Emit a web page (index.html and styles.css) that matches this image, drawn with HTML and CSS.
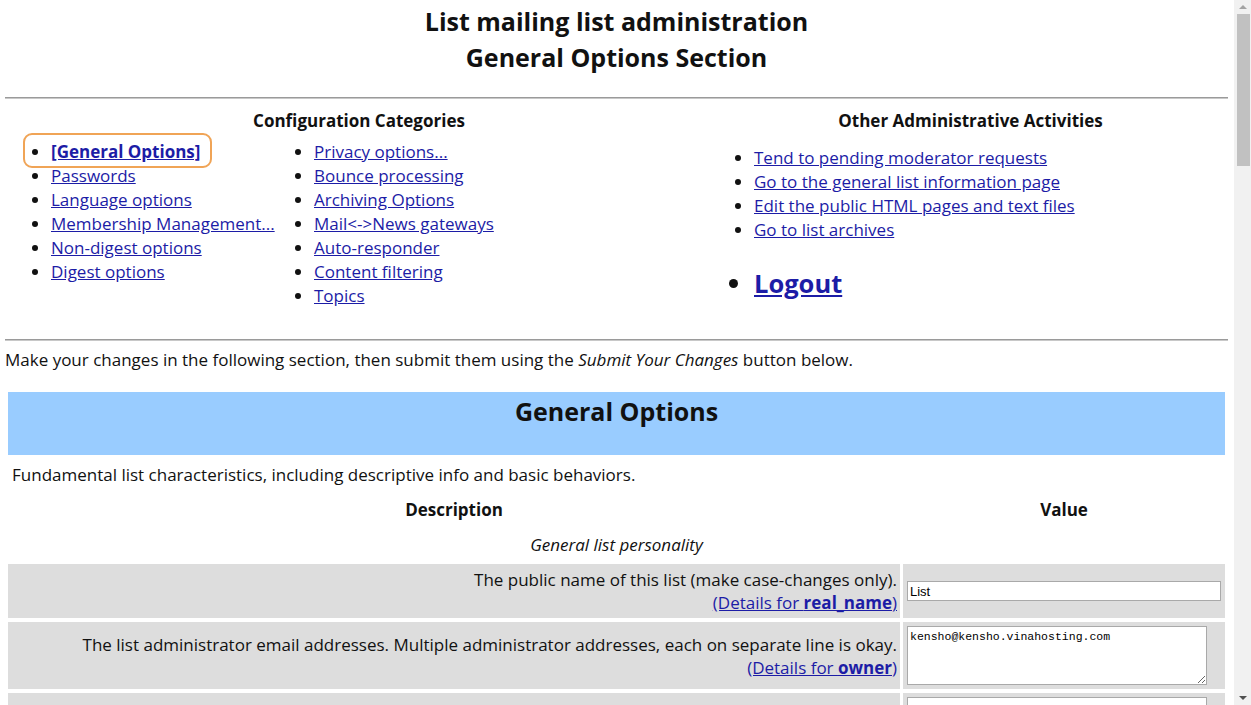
FILE: index.html
```html
<!DOCTYPE html>
<html lang="en">
<head>
    <meta charset="UTF-8">
    <title>List Administration - General Options Section</title>
    <link rel="stylesheet" href="styles.css">
</head>
<body>
    <div class="page-title">
        List mailing list administration<br>
        General Options Section
    </div>
    <hr class="rule rule-top">

    <div class="nav">
        <div class="nav-col nav-config">
            <div class="nav-head">Configuration Categories</div>
            <div class="nav-lists">
                <ul class="links">
                    <li class="current"><a href="#"><b>[General Options]</b></a></li>
                    <li><a href="#">Passwords</a></li>
                    <li><a href="#">Language options</a></li>
                    <li><a href="#">Membership Management...</a></li>
                    <li><a href="#">Non-digest options</a></li>
                    <li><a href="#">Digest options</a></li>
                </ul>
                <ul class="links">
                    <li><a href="#">Privacy options...</a></li>
                    <li><a href="#">Bounce processing</a></li>
                    <li><a href="#">Archiving Options</a></li>
                    <li><a href="#">Mail&lt;-&gt;News gateways</a></li>
                    <li><a href="#">Auto-responder</a></li>
                    <li><a href="#">Content filtering</a></li>
                    <li><a href="#">Topics</a></li>
                </ul>
            </div>
        </div>
        <div class="nav-col nav-other">
            <div class="nav-head">Other Administrative Activities</div>
            <ul class="links links-other">
                <li><a href="#">Tend to pending moderator requests</a></li>
                <li><a href="#">Go to the general list information page</a></li>
                <li><a href="#">Edit the public HTML pages and text files</a></li>
                <li><a href="#">Go to list archives</a></li>
                <li class="logout"><a href="#">Logout</a></li>
            </ul>
        </div>
    </div>

    <hr class="rule rule-bottom">

    <p class="intro">Make your changes in the following section, then submit them using the <em>Submit Your Changes</em> button below.</p>

    <table class="options">
        <colgroup>
            <col>
            <col class="value-col">
        </colgroup>
        <tr>
            <td colspan="2" class="section-head">General Options</td>
        </tr>
        <tr>
            <td colspan="2" class="section-blurb">Fundamental list characteristics, including descriptive info and basic behaviors.</td>
        </tr>
        <tr>
            <th>Description</th>
            <th>Value</th>
        </tr>
        <tr>
            <td colspan="2" class="group-title"><em>General list personality</em></td>
        </tr>
        <tr class="opt">
            <td class="desc">The public name of this list (make case-changes only).<br>
                <a href="#">(Details for <b>real_name</b>)</a></td>
            <td class="val"><input type="text" class="text-in" value="List"></td>
        </tr>
        <tr class="opt">
            <td class="desc">The list administrator email addresses. Multiple administrator addresses, each on separate line is okay.<br>
                <a href="#">(Details for <b>owner</b>)</a></td>
            <td class="val"><textarea class="area-in">kensho@kensho.vinahosting.com</textarea></td>
        </tr>
        <tr class="opt">
            <td class="desc"></td>
            <td class="val"><textarea class="area-in"></textarea></td>
        </tr>
    </table>

    <div class="scrollbar">
        <div class="sb-arrow sb-up"></div>
        <div class="sb-thumb"></div>
        <div class="sb-track"></div>
        <div class="sb-arrow sb-down"></div>
    </div>
</body>
</html>
```

FILE: styles.css
```css
body {
    margin: 0 23px 0 5px;
    font-family: "Open Sans", "Noto Sans", sans-serif;
    font-size: 17px;
    line-height: 24px;
    color: #111;
    background: #fff;
}
a {
    color: #1c1ca6;
    white-space: nowrap;
}
.page-title {
    margin-top: 3px;
    text-align: center;
    font-size: 25px;
    font-weight: bold;
    line-height: 36px;
}
.rule {
    height: 0;
    border: 0;
    border-top: 1px solid #9a9a9a;
    border-bottom: 1px solid #c8c8c8;
    margin: 0;
}
.rule-top {
    margin-top: 22px;
}
.rule-bottom {
    margin-top: 31px;
}
.nav {
    display: grid;
    grid-template-columns: 708px 1fr;
    padding-top: 10px;
}
.nav-head {
    text-align: center;
    font-weight: bold;
}
.nav-lists {
    display: grid;
    grid-template-columns: 263px auto;
    padding-left: 6px;
    margin-top: 7px;
}
.links {
    margin: 0;
    padding-left: 40px;
}
.links-other {
    margin-top: 13px;
    padding-left: 41px;
}
.current {
    position: relative;
}
.current::before {
    content: "";
    position: absolute;
    left: -28px;
    top: -7px;
    width: 185px;
    height: 31px;
    border: 2px solid #f0a456;
    border-radius: 9px;
}
.logout {
    margin-top: 24px;
    font-size: 25.5px;
    font-weight: bold;
    line-height: 34px;
}
.intro {
    margin: 7px 0 16px;
}
.options {
    width: 100%;
    border-spacing: 3px 4px;
    table-layout: fixed;
}
.value-col {
    width: 322px;
}
.options td, .options th {
    padding: 4px;
    line-height: 23px;
}
.options td.section-head {
    background: #99ccff;
    text-align: center;
    font-size: 25px;
    font-weight: bold;
    line-height: 32px;
    padding: 3px 4px 28px;
}
.section-blurb {
    text-align: left;
}
.options th {
    font-weight: bold;
}
.group-title {
    text-align: center;
}
.opt td {
    background: #dddddd;
}
.options td.desc {
    text-align: right;
    vertical-align: middle;
    padding-right: 3px;
}
.val {
    vertical-align: middle;
}
.text-in {
    display: block;
    box-sizing: border-box;
    width: 100%;
    height: 20px;
    margin: 0;
    padding: 0 2px;
    border: 1px solid #a9a9a9;
    font-family: "Liberation Sans", sans-serif;
    font-size: 13px;
}
.area-in {
    display: block;
    box-sizing: border-box;
    width: 300px;
    height: 59px;
    margin: 0;
    padding: 3px 2px 1px;
    border: 1px solid #a9a9a9;
    font-family: "Liberation Mono", monospace;
    font-size: 11.5px;
    line-height: 14px;
}

/* fake browser scrollbar, as in the screenshot */
.scrollbar {
    position: fixed;
    top: 0;
    right: 0;
    bottom: 0;
    width: 17px;
    background: #f1f1f1;
    display: flex;
    flex-direction: column;
    align-items: center;
}
.sb-arrow {
    height: 14px;
    width: 17px;
    display: flex;
    align-items: center;
    justify-content: center;
}
.sb-arrow::after {
    content: "";
    border-left: 4px solid transparent;
    border-right: 4px solid transparent;
}
.sb-up::after {
    border-bottom: 4px solid #a3a3a3;
}
.sb-down::after {
    border-top: 4px solid #505050;
}
.sb-thumb {
    width: 13px;
    height: 152px;
    margin-left: 2px;
    background: #c1c1c1;
}
.sb-track {
    flex: 1;
}
```
